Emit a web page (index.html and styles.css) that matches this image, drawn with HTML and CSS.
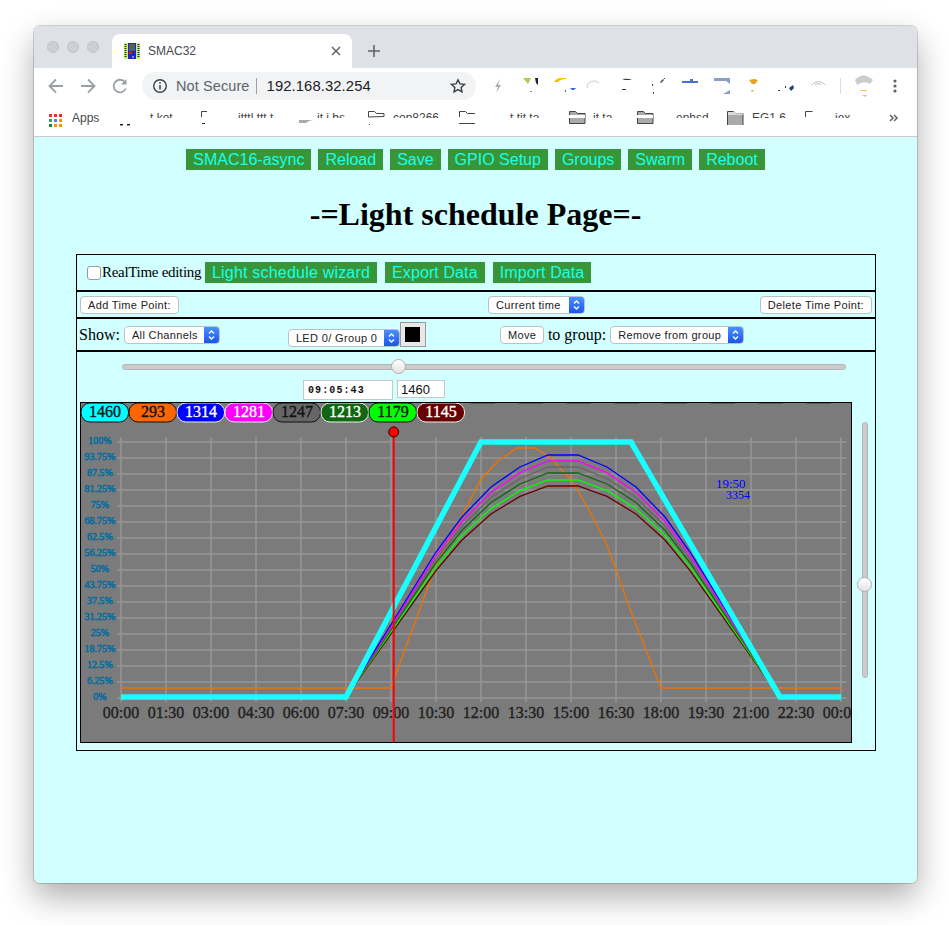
FILE: index.html
```html
<!DOCTYPE html>
<html lang="en">
<head>
<meta charset="utf-8">
<title>SMAC32</title>
<link rel="stylesheet" href="styles.css">
</head>
<body>
<div class="window">
  <header class="chrome">
    <div class="tabstrip">
      <div class="lights"><i></i><i></i><i></i></div>
      <div class="tab">
        <svg class="favicon" viewBox="0 0 16 16" width="16" height="16">
          <rect width="16" height="16" fill="#b8f58a"/>
          <path d="M1.500 1v14M14.500 1v14" stroke="#e8e820" stroke-width="2"/>
          <path d="M1.500 1v14M14.500 1v14" stroke="#1c3c1c" stroke-width="2" stroke-dasharray="1 1"/>
          <rect x="4" y="0" width="8" height="16" fill="#2222cc"/>
          <rect x="5" y="1" width="6" height="7" fill="#5c5c66"/>
          <rect x="5" y="9" width="3" height="2" fill="#f01020"/>
          <rect x="8" y="13" width="2" height="2" fill="#8888ee"/>
        </svg>
        <span class="tab-title">SMAC32</span>
        <svg class="tab-close" viewBox="0 0 10 10" width="10" height="10"><path d="M1 1l8 8M9 1l-8 8" stroke="#5f6368" stroke-width="1.5"/></svg>
      </div>
      <svg class="newtab" viewBox="0 0 12 12" width="12" height="12"><path d="M6 0v12M0 6h12" stroke="#5f6368" stroke-width="1.6"/></svg>
    </div>
    <div class="toolbar">
      <svg class="navicon" viewBox="0 0 20 20" width="20" height="20"><path d="M17 10H4M10 3.500l-6.500 6.500 6.500 6.500" fill="none" stroke="#9aa0a6" stroke-width="1.800"/></svg>
      <svg class="navicon" viewBox="0 0 20 20" width="20" height="20"><path d="M3 10h13M10 3.500l6.500 6.500-6.500 6.500" fill="none" stroke="#9aa0a6" stroke-width="1.800"/></svg>
      <svg class="navicon" viewBox="0 0 20 20" width="20" height="20"><path d="M15.800 12.500a6.300 6.300 0 1 1-.8-6.300" fill="none" stroke="#9aa0a6" stroke-width="1.800"/><path d="M16.500 3v5.500H11z" fill="#9aa0a6"/></svg>
      <div class="omnibox">
        <svg class="info" viewBox="0 0 16 16" width="16" height="16"><circle cx="8" cy="8" r="6.300" fill="none" stroke="#3c4043" stroke-width="1.400"/><path d="M8 7v4.500" stroke="#3c4043" stroke-width="1.500"/><circle cx="8" cy="4.800" r=".9" fill="#3c4043"/></svg>
        <span class="secure">Not Secure</span>
        <span class="url">192.168.32.254</span>
        <svg class="star" viewBox="0 0 16 16" width="16" height="16"><path d="M8 1.800l1.900 4.100 4.500.5-3.300 3 .9 4.400L8 11.600l-4 2.200.9-4.400-3.300-3 4.500-.5z" fill="none" stroke="#3c4043" stroke-width="1.400"/></svg>
      </div>
      <svg class="extensions" viewBox="487 68 418 36" width="418" height="36">
        <path d="M500 79l-5 8h3l-2 6 5-8h-3z" fill="#aaa"/>
        <path d="M523 78h8l-3 6z" fill="#a8d050"/><path d="M535 78h3v7l-2-2z" fill="#222"/><path d="M530 91h2v1h-2z" fill="#999"/>
        <path d="M554 82q2-4 8-4h4v1q-6 0-8 3z" fill="#fbbc04"/><path d="M570 88h6l-2 2h-2zM565 90h1v2h-1z" fill="#2f6fe8"/>
        <path d="M587 88a7 7 0 0 1 12-5" fill="none" stroke="#ccc"/>
        <path d="M622 79q6-1 10 1l-7 0zM622 89h4v1h-4z" fill="#2d3e50"/>
        <path d="M652 84h1v2h-1zM653 92h1v2h-1zM660 82l3-3 1 1-3 3zM664 78h1v1h-1z" fill="#444"/>
        <path d="M682 81h8v-2h3v2h5v2h-16z" fill="#4a6fd0"/>
        <path d="M714 78h16v6l-4-3h-12zM730 90v4h-7z" fill="#8a9fc4"/>
        <path d="M749 80l5-1 4 1-3 4h-3zM751 90h3l-2 2z" fill="#e8a020"/>
        <path d="M778 90h2v1h-2zM785 86h1v2h-1zM789 88l4-3 1 3-3 3z" fill="#24406a"/>
        <path d="M812 85a8 8 0 0 1 13 0M815 85a4 4 0 0 1 6 0" fill="none" stroke="#bbb"/>
        <path d="M840.500 78v16" stroke="#ddd"/>
        <path d="M855 80q8-9 18 0l-3 4q-6-4-13 1z" fill="#ccc"/><path d="M860 90h7v1h-7zM862 95h5l-2 2z" fill="#f0c060"/>
        <circle cx="895" cy="81" r="1.600" fill="#5f6368"/><circle cx="895" cy="86" r="1.600" fill="#5f6368"/><circle cx="895" cy="91" r="1.600" fill="#5f6368"/>
      </svg>
    </div>
    <div class="bookmarks">
      <svg class="appsgrid" viewBox="0 0 13 13" width="13" height="13">
        <path d="M0 0h3v3H0zM5 0h3v3H5zM10 0h3v3h-3z" fill="#ea3323"/>
        <path d="M0 5h3v3H0z" fill="#34a853"/><path d="M5 5h3v3H5z" fill="#4285f4"/><path d="M10 5h3v3h-3z" fill="#f29900"/>
        <path d="M0 10h3v3H0z" fill="#188038"/><path d="M5 10h3v3H5zM10 10h3v3h-3z" fill="#f29900"/>
      </svg>
      <span class="apps">Apps</span>
      <svg class="bookmark-strip" viewBox="110 104 800 32" width="800" height="32">
        <defs><clipPath id="tops"><rect x="110" y="112" width="800" height="6"/></clipPath></defs>
        <g class="frag" clip-path="url(#tops)">
          <text x="150" y="122">t ket</text>
          <text x="238" y="122">itttl ttt t</text>
          <text x="317" y="122">it i bs</text>
          <text x="393" y="122">cop8266</text>
          <text x="510" y="122">t tit ta</text>
          <text x="593" y="122">it ta</text>
          <text x="676" y="122">enhsd</text>
          <text x="752" y="122">EG1.6</text>
          <text x="835" y="122">iex</text>
        </g>
        <path d="M120 124h3v1.500h-3zM127 124h3v1.500h-3zM202 123h3v1h-3z" fill="#222"/>
        <path d="M201.500 117v-5.500h5.500" fill="none" stroke="#444"/>
        <path d="M299 123v-3h14l-4 1-3 2z" fill="#aaa"/>
        <path d="M368.500 117v-5.500h6l2 2h7.500v3z" fill="none" stroke="#444"/><path d="M369 124h1v1h-1z" fill="#444"/>
        <path d="M459.500 117v-5.500h6l2 2h7.500M459 123.500h16" fill="none" stroke="#444"/>
        <path d="M569.500 123.500v-12h6l2 2h7.500v10z" fill="#aaa" stroke="#444"/><path d="M569 115h16v3h-16z" fill="#fff"/>
        <path d="M637.500 123.500v-12h6l2 2h7.500v10z" fill="#aaa" stroke="#444"/><path d="M637 115h16v3h-16z" fill="#fff"/>
        <path d="M727.500 125v-13.500h6l2 2h7.500v11.500" fill="#aaa" stroke="#444"/><path d="M728 112h15v3h-15z" fill="#fff" opacity=".6"/>
        <path d="M805.500 117v-5.500h7" fill="none" stroke="#444"/>
        <path d="M890 115l3 3-3 3M894 115l3 3-3 3" fill="none" stroke="#5f6368" stroke-width="1.500"/>
      </svg>
    </div>
  </header>

  <main class="page">
    <nav class="nav">
      <a class="green-btn">SMAC16-async</a>
      <a class="green-btn">Reload</a>
      <a class="green-btn">Save</a>
      <a class="green-btn">GPIO Setup</a>
      <a class="green-btn">Groups</a>
      <a class="green-btn">Swarm</a>
      <a class="green-btn">Reboot</a>
    </nav>
    <h1 class="title">-=Light schedule Page=-</h1>

    <section class="panel">
      <div class="row row-top">
        <label class="rt-label"><input class="check" type="checkbox"><span>RealTime editing</span></label>
        <a class="green-btn wizard-btn">Light schedule wizard</a>
        <a class="green-btn">Export Data</a>
        <a class="green-btn">Import Data</a>
      </div>
      <div class="row row-points">
        <button class="mac-btn">Add Time Point:</button>
        <select class="mac-select current-time"><option>Current time</option></select>
        <button class="mac-btn delete-btn">Delete Time Point:</button>
      </div>
      <div class="row row-show">
        <span class="serif-label">Show:</span>
        <select class="mac-select all-channels"><option>All Channels</option></select>
        <div class="led-group">
          <select class="mac-select led-select"><option>LED 0/ Group 0</option></select>
          <span class="swatch"><i></i></span>
        </div>
        <button class="mac-btn move-btn">Move</button>
        <span class="serif-label">to group:</span>
        <select class="mac-select group-select"><option>Remove from group</option></select>
      </div>
      <div class="row-chart">
        <input class="slider h-slider" type="range" min="0" max="1000" value="379">
        <div class="inputs">
          <input class="time-input" type="text" value="09:05:43">
          <input class="value-input" type="text" value="1460">
        </div>
        <div class="chart-wrap">
          <svg class="chart" viewBox="80 402 772 341" width="772" height="341">
            <defs><clipPath id="plot"><rect x="80" y="402" width="772" height="341"/></clipPath></defs>
            <g clip-path="url(#plot)">
              <rect x="80" y="402" width="772" height="341" fill="#7b7b7b"/>
              <path d="M121 437V702M166 437V702M211 437V702M256 437V702M301 437V702M346 437V702M391 437V702M436 437V702M481 437V702M526 437V702M571 437V702M616 437V702M661 437V702M706 437V702M751 437V702M796 437V702M841 437V702" stroke="#979797" stroke-width="1.500"/>
              <path d="M117 442H846M117 458H846M117 474H846M117 490H846M117 506H846M117 522H846M117 538H846M117 554H846M117 570H846M117 586H846M117 602H846M117 618H846M117 634H846M117 650H846M117 666H846M117 682H846M117 698H846" stroke="#979797" stroke-width="1.500"/>
              <path d="M470 403.500H846" stroke="#5c5c5c" stroke-width="1" stroke-dasharray="25 23"/>

              <g class="ylab">
                <text x="100" y="444">100%</text><text x="100" y="460">93.75%</text><text x="100" y="476">87.5%</text><text x="100" y="492">81.25%</text>
                <text x="100" y="508">75%</text><text x="100" y="524">68.75%</text><text x="100" y="540">62.5%</text><text x="100" y="556">56.25%</text>
                <text x="100" y="572">50%</text><text x="100" y="588">43.75%</text><text x="100" y="604">37.5%</text><text x="100" y="620">31.25%</text>
                <text x="100" y="636">25%</text><text x="100" y="652">18.75%</text><text x="100" y="668">12.5%</text><text x="100" y="684">6.25%</text><text x="100" y="700">0%</text>
              </g>
              <g class="xlab">
                <text x="121" y="718">00:00</text><text x="166" y="718">01:30</text><text x="211" y="718">03:00</text><text x="256" y="718">04:30</text>
                <text x="301" y="718">06:00</text><text x="346" y="718">07:30</text><text x="391" y="718">09:00</text><text x="436" y="718">10:30</text>
                <text x="481" y="718">12:00</text><text x="526" y="718">13:30</text><text x="571" y="718">15:00</text><text x="616" y="718">16:30</text>
                <text x="661" y="718">18:00</text><text x="706" y="718">19:30</text><text x="751" y="718">21:00</text><text x="796" y="718">22:30</text><text x="841" y="718">00:00</text>
              </g>

              <polyline class="line" stroke="#f07400" points="121,688 391,688 400,663 436,565 460,520 481,479 498,461 517,448 535,448 550,457 571,480 588,508 607,545 633,617 661,688 841,688"/>
              <polyline class="line" stroke="#660000" points="346,697 436,570.600 462,540 491,513.900 520,496.400 548,486 578,486 607,496.400 636,513.900 665,540 690,570.600 780,697"/>
              <polyline class="line" stroke="#00ff00" points="346,697 436,567 462,535.500 491,508.600 520,490.700 548,480 578,480 607,490.700 636,508.600 665,535.500 690,567 780,697"/>
              <polyline class="line" stroke="#116611" points="346,697 436,562.700 462,530.300 491,502.500 520,484 548,473 578,473 607,484 636,502.500 665,530.300 690,562.700 780,697"/>
              <polyline class="line" stroke="#666666" points="346,697 436,559.200 462,526 491,497.500 520,478.500 548,467 578,467 607,478.500 636,497.500 665,526 690,559.200 780,697"/>
              <polyline class="line" stroke="#ff00ff" points="346,697 436,555.600 462,521.500 491,492.200 520,472.700 548,461 578,461 607,472.700 636,492.200 665,521.500 690,555.600 780,697"/>
              <polyline class="line" stroke="#0000ff" points="346,697 436,552 462,517 491,487 520,467 548,455 578,455 607,467 636,487 665,517 690,552 780,697"/>
              <polyline class="line cyan" points="121,697 346,697 481,442 631,442 780,697 841,697"/>

              <path d="M393.700 426V743" stroke="#ff0000" stroke-width="2"/>
              <circle cx="393.700" cy="432" r="5" fill="#ff0000" stroke="#111" stroke-width="1"/>

              <text class="note note-time" x="716" y="488">19:50</text>
              <text class="note note-val" x="726" y="499">3354</text>

              <g class="pills">
                <g><rect x="81" y="403" width="47.500" height="19" rx="9" fill="#00ffff" stroke="#111"/><text x="105" y="417">1460</text></g>
                <g><rect x="129" y="403" width="47.500" height="19" rx="9" fill="#ff6600" stroke="#111"/><text x="153" y="417">293</text></g>
                <g class="inv"><rect x="177" y="403" width="47.500" height="19" rx="9" fill="#0000ff" stroke="#eee"/><text x="201" y="417">1314</text></g>
                <g class="inv"><rect x="225" y="403" width="47.500" height="19" rx="9" fill="#ff00ff" stroke="#eee"/><text x="249" y="417">1281</text></g>
                <g><rect x="273" y="403" width="47.500" height="19" rx="9" fill="#666666" stroke="#111"/><text x="297" y="417">1247</text></g>
                <g class="inv"><rect x="321" y="403" width="47.500" height="19" rx="9" fill="#116611" stroke="#eee"/><text x="345" y="417">1213</text></g>
                <g><rect x="369" y="403" width="47.500" height="19" rx="9" fill="#00ff00" stroke="#111"/><text x="393" y="417">1179</text></g>
                <g class="inv"><rect x="417" y="403" width="47.500" height="19" rx="9" fill="#660000" stroke="#eee"/><text x="441" y="417">1145</text></g>
              </g>
              <rect x="80.500" y="402.500" width="771" height="340" fill="none" stroke="#000"/>
            </g>
          </svg>
          <input class="slider v-slider" type="range" min="0" max="1000" value="645">
        </div>
      </div>
    </section>
  </main>
</div>
</body>
</html>
```

FILE: styles.css
```css
* { box-sizing: border-box; }

html, body {
  margin: 0;
  height: 100%;
  background: #ffffff;
  overflow: hidden;
}

.window {
  margin: 26px 0 0 34px;
  width: 883px;
  height: 857px;
  border-radius: 6px;
  overflow: hidden;
  display: flex;
  flex-direction: column;
  font-family: "Liberation Sans", Arial, sans-serif;
  box-shadow: 0 0 0 1px rgba(0, 0, 0, 0.16), 0 14px 32px rgba(0, 0, 0, 0.32);
}

/* browser chrome */
.chrome { background: #ffffff; border-bottom: 1px solid #c9cbce; flex: none; }

.tabstrip {
  height: 42px;
  background: #dee1e6;
  display: flex;
  align-items: flex-end;
  padding-left: 13px;
}

.lights { display: flex; gap: 8px; align-self: flex-start; margin-top: 15px; width: 65px; }
.lights i {
  width: 12px;
  height: 12px;
  border-radius: 50%;
  background: #cdcfd2;
  border: 1px solid #c0c2c5;
}

.tab {
  width: 240px;
  height: 34px;
  background: #ffffff;
  border-radius: 8px 8px 0 0;
  display: flex;
  align-items: center;
  padding: 0 11px 0 12px;
}
.favicon { flex: none; }
.tab-title { font-size: 12px; color: #45484c; margin-left: 8px; flex: 1; }
.tab-close { flex: none; }
.newtab { margin: 0 0 11px 16px; }

.toolbar { height: 36px; display: flex; align-items: center; padding-left: 12px; gap: 12px; }
.navicon { flex: none; }

.omnibox {
  width: 334px;
  height: 28px;
  border-radius: 14px;
  background: #f1f3f4;
  display: flex;
  align-items: center;
  padding: 0 10px;
  flex: none;
}
.info { flex: none; }
.secure {
  font-size: 14.5px;
  letter-spacing: 0.1px;
  color: #5f6368;
  margin-left: 8px;
  padding-right: 6px;
  line-height: 16px;
  border-right: 1px solid #9aa0a6;
}
.url { font-size: 14.8px; color: #202124; margin-left: 10px; flex: 1; letter-spacing: 0.1px; }
.star { flex: none; }
.extensions { flex: none; margin-left: -1px; }

.bookmarks { height: 32px; display: flex; align-items: center; padding-left: 15px; }
.appsgrid { flex: none; }
.apps { font-size: 12px; color: #45484c; margin: 0 0 4px 10px; width: 38px; }
.bookmark-strip { flex: none; }
.frag text { font-size: 12px; fill: #444; font-family: "Liberation Sans", Arial, sans-serif; }

/* page */
.page { flex: 1; background: #d2ffff; padding-top: 12px; }

.nav { display: flex; justify-content: center; gap: 7px; }

.green-btn {
  display: block;
  background: #389638;
  color: #1affe8;
  font-size: 16px;
  line-height: 21px;
  height: 21px;
  padding: 0 7px;
  white-space: nowrap;
}

.title {
  margin: 26px 0 21px;
  text-align: center;
  font: bold 32px/37px "Liberation Serif", "Times New Roman", serif;
  color: #000;
}

.panel {
  margin-left: 42px;
  width: 800px;
  height: 497px;
  border: 1px solid #000;
  display: flex;
  flex-direction: column;
}

.row { display: flex; align-items: center; border-bottom: 2px solid #000; flex: none; }

.row-top { height: 37px; padding-left: 10px; gap: 8px; }
.row-top .green-btn { letter-spacing: 0.1px; }
.row-top .wizard-btn { letter-spacing: 0.2px; }
.rt-label { display: flex; align-items: center; width: 110px; white-space: nowrap; }
.rt-label span {
  font: 15px "Liberation Serif", "Times New Roman", serif;
  letter-spacing: -0.3px;
  color: #000;
  margin-left: 1px;
}
.check {
  appearance: none;
  -webkit-appearance: none;
  margin: 0;
  flex: none;
  width: 14px;
  height: 14px;
  border: 1px solid #9a9a9a;
  border-radius: 3px;
  background: #ffffff;
}

.row-points { height: 27px; padding: 0 3px; }
.current-time { width: 97px; margin-left: 309px; }
.delete-btn { margin-left: auto; }

.row-show { height: 33px; padding-left: 2px; }
.serif-label { font: 16px "Liberation Serif", "Times New Roman", serif; color: #000; }
.all-channels { width: 96px; margin-left: 4px; }
.led-group { display: flex; align-items: flex-end; align-self: flex-end; margin: 0 0 3px 68px; }
.led-select { width: 112px; }
.swatch {
  display: flex;
  align-items: center;
  justify-content: center;
  width: 26px;
  height: 25px;
  background: #e8e8e8;
  border: 1px solid #999;
}
.swatch i { display: block; width: 15px; height: 15px; background: #000; }
.move-btn { margin: 0 4px 0 74px; width: 44px; }
.group-select { width: 134px; margin-left: 4px; }

.mac-btn, .mac-select {
  appearance: none;
  -webkit-appearance: none;
  font: 11px "Liberation Sans", Arial, sans-serif;
  letter-spacing: 0.35px;
  color: #222;
  height: 18px;
  padding: 0 7px;
  border: 1px solid #b9c3c3;
  border-radius: 4px;
  background-color: #ffffff;
  white-space: nowrap;
}
.mac-btn { flex: none; }
.mac-select {
  flex: none;
  padding-right: 18px;
  background-image:
    url("data:image/svg+xml,%3Csvg xmlns='http://www.w3.org/2000/svg' width='15' height='18'%3E%3Cpath d='M5 7.500l2.500-2.500 2.500 2.500M5 10.500l2.500 2.500 2.500-2.500' fill='none' stroke='white' stroke-width='1.400'/%3E%3C/svg%3E"),
    linear-gradient(#4a90fb, #1a55ee);
  background-repeat: no-repeat;
  background-position: right center, right center;
  background-size: 15px 18px, 15px 100%;
}

.row-chart { flex: 1; display: flex; flex-direction: column; }

.slider {
  appearance: none;
  -webkit-appearance: none;
  background: transparent;
  margin: 0;
  display: block;
}
.slider::-webkit-slider-runnable-track {
  background: #cccccc;
  border: 1px solid #b4b4b4;
  border-radius: 3px;
}
.slider::-webkit-slider-thumb {
  -webkit-appearance: none;
  appearance: none;
  width: 15px;
  height: 15px;
  border-radius: 50%;
  border: 1px solid #b0b0b0;
  background: linear-gradient(#ffffff, #e4e4e4);
}

.h-slider { width: 724px; height: 15px; margin: 7px 0 0 45px; }
.h-slider::-webkit-slider-runnable-track { height: 6px; }
.h-slider::-webkit-slider-thumb { margin-top: -5.500px; }

.v-slider {
  writing-mode: vertical-lr;
  width: 15px;
  height: 256px;
  margin: 20px 0 0 5px;
}
.v-slider::-webkit-slider-runnable-track { width: 6px; height: 100%; }
.v-slider::-webkit-slider-thumb { margin-left: -5.500px; }

.inputs { display: flex; align-items: flex-start; gap: 4px; margin: 6px 0 0 226px; height: 22px; }
.time-input, .value-input {
  border: 1px solid #c4c8c8;
  background: #ffffff;
  color: #111;
  padding: 0 5px;
  margin: 0;
  outline: none;
}
.time-input {
  width: 90px;
  height: 20px;
  font: bold 10px "Liberation Mono", "Courier New", monospace;
  letter-spacing: 1.1px;
  padding-left: 4px;
}
.value-input { width: 48px; height: 18px; font: 13px "Liberation Sans", Arial, sans-serif; padding: 0 3px; }

.chart-wrap { display: flex; align-items: flex-start; margin-left: 3px; }
.chart { display: block; flex: none; }

.line { fill: none; stroke-width: 1.300; }
.cyan { stroke: #19ffff; stroke-width: 5.500; }

.ylab text {
  font: 10px "Liberation Serif", "Times New Roman", serif;
  text-anchor: middle;
  fill: #006ba2;
  stroke: #006ba2;
  stroke-width: 0.5;
}
.xlab text {
  font: 16px "Liberation Serif", "Times New Roman", serif;
  text-anchor: middle;
  fill: #222;
  stroke: #222;
  stroke-width: 0.4;
}
.pills text {
  font: 16px "Liberation Serif", "Times New Roman", serif;
  text-anchor: middle;
  fill: #111;
  stroke: #111;
  stroke-width: 0.35;
}
.pills .inv text { fill: #fff; stroke: #fff; }
.pills rect { stroke-width: 1; }

.note { font-family: "Liberation Serif", "Times New Roman", serif; fill: #0000ff; }
.note-time { font-size: 13px; }
.note-val { font-size: 12px; }
```
